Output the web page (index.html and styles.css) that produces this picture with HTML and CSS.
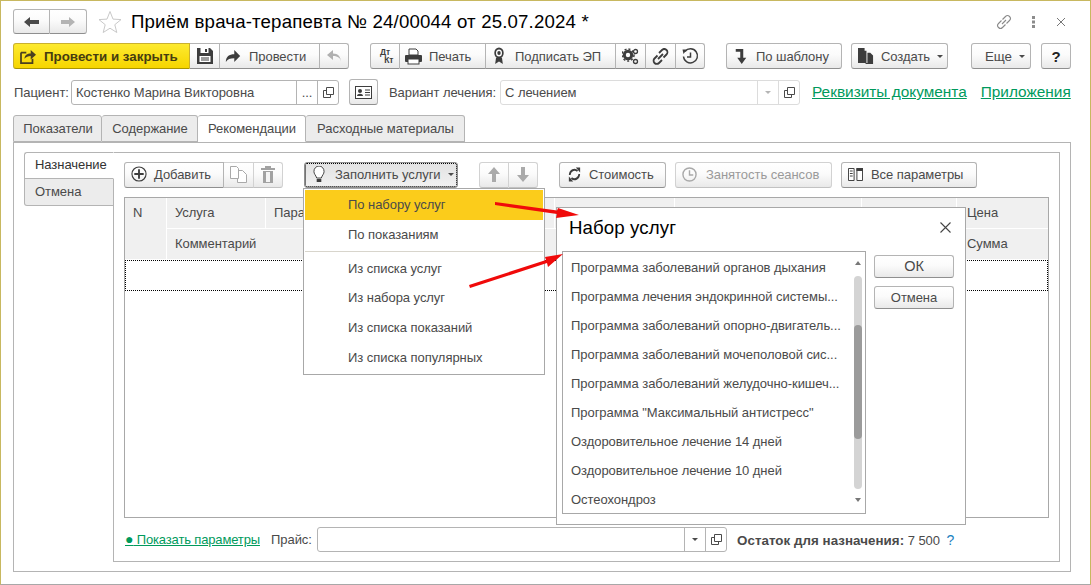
FILE: index.html
```html
<!DOCTYPE html>
<html lang="ru">
<head>
<meta charset="utf-8">
<title>Приём врача-терапевта</title>
<link rel="stylesheet" href="styles.css">
</head>
<body>
<div class="window">
  <header class="head">
    <div class="btn-group nav">
      <button class="btn nav-btn"><svg width="16" height="12" viewBox="0 0 16 12"><path d="M0 6l6-5v3h9v4H6v3z" fill="#4a4a4a"/></svg></button>
      <button class="btn nav-btn"><svg width="16" height="12" viewBox="0 0 16 12"><path d="M15 6L9 1v3H1v4h8v3z" fill="#b4b4b4"/></svg></button>
    </div>
    <svg class="star" width="24" height="24" viewBox="0 0 24 24"><path d="M12 1.500l3 7.600 8 .5-6.200 5.100 2 7.800L12 18.200 5.200 22.500l2-7.800L1 9.600l8-.5z" fill="none" stroke="#c9c9c9"/></svg>
    <h1 class="title">Приём врача-терапевта № 24/00044 от 25.07.2024 *</h1>
    <div class="head-icons">
      <svg width="16" height="16" viewBox="0 0 16 16"><g fill="none" stroke="#8a8a8a" stroke-width="1.100"><path d="M6.500 5.500l3-3a2.800 2.800 0 0 1 4 4l-3 3"/><path d="M9.500 10.500l-3 3a2.800 2.800 0 0 1-4-4l3-3"/><path d="M6 10l4-4"/></g></svg>
      <svg class="dots" width="4" height="12" viewBox="0 0 4 12"><g fill="#8c8c8c"><rect x="0" y="0" width="3" height="3"/><rect x="0" y="4.500" width="3" height="3"/><rect x="0" y="9" width="3" height="3"/></g></svg>
      <svg width="10" height="10" viewBox="0 0 10 10"><path d="M1 1l8 8M9 1l-8 8" stroke="#777" stroke-width="1"/></svg>
    </div>
  </header>

  <div class="toolbar main-tools">
    <div class="btn-group g1">
      <button class="btn primary w-post"><svg width="17" height="15" viewBox="0 0 19 17"><path d="M1 4h6M1 4v12h13v-5" fill="none" stroke="#4a4020" stroke-width="2"/><path d="M5 11c0-4 3-6 7-6V1l6 5.500-6 5.500V8c-3 0-5 1-7 3z" fill="#4a4020"/></svg><b>Провести и закрыть</b></button>
      <button class="btn w30"><svg width="16" height="16" viewBox="0 0 16 16"><path d="M0 0h13l3 3v13H0z" fill="#3d3d3d"/><rect x="3.500" y="0" width="8" height="5" fill="#fff"/><rect x="8" y="1" width="2" height="3" fill="#3d3d3d"/><rect x="2.500" y="8" width="11" height="6" fill="#fff"/><path d="M4 10h8M4 12h8" stroke="#3d3d3d"/></svg></button>
      <button class="btn w-run"><svg width="16" height="13" viewBox="0 0 19 14" preserveAspectRatio="none"><path d="M1 13c0-6 4-8.500 10-8.500V0l7 6.500-7 6.500V9C6 9 3 10 1 13z" fill="#3d3d3d"/></svg>Провести</button>
      <button class="btn w29"><svg width="16" height="13" viewBox="0 0 16 13"><path d="M15 13c0-5-3-7-8-7V10L1 5l6-5v3.500c5 0 8 3 8 9.500z" fill="#b0b0b0"/></svg></button>
    </div>
    <div class="btn-group g2">
      <button class="btn w30"><span class="dtkt"><i>Дт</i><i>Кт</i></span></button>
      <button class="btn w-print"><svg width="17" height="17" viewBox="0 0 17 17"><path d="M4 1h7l2 2v4H4z" fill="#fff" stroke="#3d3d3d"/><rect x="0" y="7" width="17" height="7" rx="1" fill="#3d3d3d"/><rect x="3" y="11" width="11" height="5" fill="#fff" stroke="#3d3d3d"/></svg>Печать</button>
      <button class="btn w-sign"><svg width="12" height="18" viewBox="0 0 14 18" preserveAspectRatio="none"><circle cx="7" cy="6" r="5.500" fill="#3d3d3d"/><circle cx="7" cy="6" r="3.500" fill="#fff"/><circle cx="7" cy="6" r="2" fill="#3d3d3d"/><path d="M3.500 11L2.500 17 7 14.500 11.500 17 10.500 11z" fill="#3d3d3d"/></svg>Подписать ЭП</button>
      <button class="btn w30"><svg width="17" height="17" viewBox="0 0 17 17"><circle cx="6" cy="7" r="3.700" fill="none" stroke="#3d3d3d" stroke-width="3"/><circle cx="6" cy="7" r="6" fill="none" stroke="#3d3d3d" stroke-width="1.500" stroke-dasharray="2 2"/><circle cx="13.500" cy="3.500" r="2" fill="none" stroke="#3d3d3d" stroke-width="1.300"/><circle cx="13.500" cy="13.500" r="2" fill="none" stroke="#3d3d3d" stroke-width="1.300"/></svg></button>
      <button class="btn w30"><svg width="17" height="17" viewBox="0 0 17 17"><g fill="none" stroke="#3d3d3d" stroke-width="1.800"><path d="M7 5l3-3a3 3 0 0 1 4.500 4.500l-3 3"/><path d="M10 12l-3 3a3 3 0 0 1-4.500-4.500l3-3"/><path d="M6 11l5-5"/></g></svg></button>
      <button class="btn w29"><svg width="17" height="17" viewBox="0 0 17 17"><g fill="none" stroke="#3d3d3d" stroke-width="1.500"><path d="M3 3.500A7 7 0 1 1 1.500 8.500"/><path d="M8.500 4.500V9H5"/></g><path d="M0.500 1.500L5 1.500 1.500 6z" fill="#3d3d3d"/></svg></button>
    </div>
    <button class="btn solo w-tpl"><svg width="12" height="15" viewBox="0 0 16 17" preserveAspectRatio="none"><path d="M1 0h10v10h4l-6 7-6-7h4V3H1z" fill="#3d3d3d"/></svg>По шаблону</button>
    <button class="btn solo w-create"><svg width="16" height="16" viewBox="0 0 17 17"><path d="M0 0h7v3h2v13H0z" fill="#3d3d3d"/><path d="M10 5h3l3 3v9H8v-1h2z" fill="#3d3d3d"/></svg>Создать<span class="caret"></span></button>
    <button class="btn solo w-more">Еще<span class="caret"></span></button>
    <button class="btn solo w-help"><b>?</b></button>
  </div>

  <div class="fields">
    <label class="lbl patient-lbl">Пациент:</label>
    <div class="field f-patient"><span class="val">Костенко Марина Викторовна</span><span class="cell">...</span><span class="cell"><svg class="copy" width="11" height="11" viewBox="0 0 11 11"><path d="M3.500.5h7v7h-7zM3.500 3.500h-3v7h7v-3" fill="none" stroke="#4a4a4a"/></svg></span></div>
    <button class="btn solo w-card"><svg width="17" height="13" viewBox="0 0 17 13"><rect x=".5" y=".5" width="16" height="12" fill="#fff" stroke="#3d3d3d"/><circle cx="5" cy="5" r="2" fill="#3d3d3d"/><path d="M2 10c0-3 6-3 6 0z" fill="#3d3d3d"/><path d="M10 4h5M10 6.500h5M10 9h5" stroke="#3d3d3d"/></svg></button>
    <label class="lbl variant-lbl">Вариант лечения:</label>
    <div class="field f-variant"><span class="val">С лечением</span><span class="cell light"><span class="caret pale"></span></span><span class="cell light"><svg class="copy" width="11" height="11" viewBox="0 0 11 11"><path d="M3.500.5h7v7h-7zM3.500 3.500h-3v7h7v-3" fill="none" stroke="#4a4a4a"/></svg></span></div>
    <a class="big-link l1">Реквизиты документа</a>
    <a class="big-link">Приложения</a>
  </div>

  <nav class="tabs">
    <span class="tab t1">Показатели</span>
    <span class="tab t2">Содержание</span>
    <span class="tab t3 active">Рекомендации</span>
    <span class="tab t4">Расходные материалы</span>
  </nav>

  <section class="outer">
    <div class="side">
      <span class="stab active">Назначение</span>
      <span class="stab">Отмена</span>
    </div>
    <div class="inner">
      <div class="toolbar sub-tools">
        <div class="btn-group">
          <button class="btn w-add"><svg width="16" height="16" viewBox="0 0 17 17"><circle cx="8.500" cy="8.500" r="7.500" fill="none" stroke="#3d3d3d" stroke-width="1.200"/><path d="M8.500 3.500v10M3.500 8.500h10" stroke="#3d3d3d" stroke-width="2"/></svg>Добавить</button>
          <button class="btn w30 off"><svg width="17" height="17" viewBox="0 0 17 17"><path d="M.5.500h6l2 2v10h-8zM8.500 4.500h4l4 4v8h-9v-4" fill="#fff" stroke="#a9a9a9"/></svg></button>
          <button class="btn w29 off"><svg width="14" height="17" viewBox="0 0 14 17"><path d="M0 2h14v2H0zM4 0h6v2H4z" fill="#a2a2a2"/><path d="M2 5h10v12H2z" fill="#a2a2a2"/><path d="M5 6v10h4V6z" fill="#f4f4f4"/></svg></button>
        </div>
        <button class="btn solo w-fill pressed"><svg width="12" height="17" viewBox="0 0 13 17" preserveAspectRatio="none"><path d="M4 12C3 9 1 8 1 5.500a5.500 5.500 0 0 1 11 0C12 8 10 9 9 12z" fill="#fff" stroke="#3d3d3d"/><path d="M4 13h5v3H4z" fill="#3d3d3d"/></svg>Заполнить услуги<span class="caret"></span></button>
        <div class="btn-group g-arrows">
          <button class="btn w30 off"><svg width="12" height="15" viewBox="0 0 12 15"><path d="M6 0l6 7H8v8H4V7H0z" fill="#aaa"/></svg></button>
          <button class="btn w29 off"><svg width="12" height="15" viewBox="0 0 12 15"><path d="M6 15l6-7H8V0H4v8H0z" fill="#aaa"/></svg></button>
        </div>
        <button class="btn solo w-cost"><svg width="13" height="15" viewBox="0 0 15 15" preserveAspectRatio="none"><g fill="none" stroke="#3d3d3d" stroke-width="2"><path d="M2 8a5.500 5.500 0 0 1 9-4"/><path d="M13 7a5.500 5.500 0 0 1-9 4"/></g><path d="M9 .5h5v5zM6 14.500H1v-5z" fill="#3d3d3d"/></svg>Стоимость</button>
        <button class="btn solo w-busy off"><svg width="15" height="15" viewBox="0 0 16 16"><circle cx="8" cy="8" r="7" fill="none" stroke="#a9a9a9" stroke-width="1.500"/><path d="M8 3.500V8.500H12" fill="none" stroke="#a9a9a9" stroke-width="1.500"/></svg>Занятость сеансов</button>
        <button class="btn solo w-all"><svg width="15" height="13" viewBox="0 0 16 13" preserveAspectRatio="none"><path d="M.5.500h6v12h-6zM9.500.5h6v12h-6z" fill="#fff" stroke="#3d3d3d"/><path d="M2 3h3M2 5.500h3M2 8h3" stroke="#3d3d3d"/><path d="M9 0h7v3H9z" fill="#3d3d3d"/></svg>Все параметры</button>
      </div>

      <div class="table">
        <div class="hcell c-n">N</div>
        <div class="hcell c-service">Услуга</div>
        <div class="hcell c-param">Параметры</div>
        <div class="hcell c-a"></div>
        <div class="hcell c-b"></div>
        <div class="hcell c-c"></div>
        <div class="hcell c-price">Цена</div>
        <div class="hcell c-comment">Комментарий</div>
        <div class="hcell c-sum">Сумма</div>
        <div class="focus-row"></div>
      </div>

      <div class="bottom">
        <a class="show-link"><span class="dot">●</span>&nbsp;Показать параметры</a>
        <label class="lbl price-lbl">Прайс:</label>
        <div class="field f-price"><span class="val"></span><span class="cell"><span class="caret"></span></span><span class="cell"><svg class="copy" width="11" height="11" viewBox="0 0 11 11"><path d="M3.500.5h7v7h-7zM3.500 3.500h-3v7h7v-3" fill="none" stroke="#4a4a4a"/></svg></span></div>
        <p class="remain"><b>Остаток для назначения:</b> 7 500 <span class="q">?</span></p>
      </div>
    </div>
  </section>

  <div class="menu">
    <div class="mi hover">По набору услуг</div>
    <div class="mi">По показаниям</div>
    <div class="sep"></div>
    <div class="mi">Из списка услуг</div>
    <div class="mi">Из набора услуг</div>
    <div class="mi">Из списка показаний</div>
    <div class="mi">Из списка популярных</div>
  </div>

  <div class="dialog">
    <div class="dlg-head"><h2>Набор услуг</h2><svg width="11" height="11" viewBox="0 0 11 11"><path d="M.5.500l10 10M10.500.5l-10 10" stroke="#444" stroke-width="1.100"/></svg></div>
    <div class="dlg-body">
      <div class="list">
        <ul class="items">
          <li>Программа заболеваний органов дыхания</li>
          <li>Программа лечения эндокринной системы...</li>
          <li>Программа заболеваний опорно-двигатель...</li>
          <li>Программа заболеваний мочеполовой сис...</li>
          <li>Программа заболеваний желудочно-кишеч...</li>
          <li>Программа "Максимальный антистресс"</li>
          <li>Оздоровительное лечение 14 дней</li>
          <li>Оздоровительное лечение 10 дней</li>
          <li>Остеохондроз</li>
        </ul>
        <div class="scroll">
          <span class="sarrow up"></span>
          <div class="track"><div class="thumb"></div></div>
          <span class="sarrow down"></span>
        </div>
      </div>
      <div class="dlg-btns">
        <button class="btn solo dlg-btn ok-btn">ОК</button>
        <button class="btn solo dlg-btn">Отмена</button>
      </div>
    </div>
  </div>

  <svg class="arrows" width="1091" height="585" viewBox="0 0 1091 585">
    <path d="M495 202l62 8.500 1-2.500 21 7-23 3 1-4-62-9z" fill="#f00a0a"/>
    <path d="M469 285l77-25-1-3 18-3-15 13-1-4-77 25z" fill="#f00a0a"/>
  </svg>
</div>
</body>
</html>
```
FILE: styles.css
```css
* { box-sizing: border-box; }
html, body { margin: 0; padding: 0; }
body { width: 1091px; height: 585px; overflow: hidden; background: #fff; font: 13px "Liberation Sans", Arial, sans-serif; letter-spacing: -.05px; color: #4a4a4a; }
h1, h2, p, ul { margin: 0; padding: 0; }
li { list-style: none; }
button { font: inherit; letter-spacing: inherit; color: inherit; padding: 0; margin: 0; }

.window { position: relative; width: 1091px; height: 585px; border-top: 1px solid #c8b860; border-left: 1px solid #c8b860; border-right: 1px solid #c8b860; border-bottom: 1px solid #a8a8a8; padding: 8px 0 0 12px; }

.btn { height: 26px; display: inline-flex; align-items: center; justify-content: center; gap: 7px; border: 1px solid #b4b4b4; border-bottom-color: #8f8f8f; border-left-width: 0; background: linear-gradient(#fff 0%, #fbfbfb 45%, #e9e9e9 100%); white-space: nowrap; }
.btn-group { display: flex; border-radius: 3px; }
.btn-group .btn:first-child { border-left-width: 1px; border-radius: 3px 0 0 3px; }
.btn-group .btn:last-child { border-radius: 0 3px 3px 0; }
.btn.solo { border-left-width: 1px; border-radius: 3px; }
.btn.off { color: #9a9a9a; border-color: #d2d2d2; border-bottom-color: #c2c2c2; }

.head { display: flex; align-items: center; height: 25px; }
.nav-btn { width: 37px; height: 25px; }
.star { margin: 0 0 0 11px; }
.title { font-size: 18.67px; font-weight: 400; color: #000; margin-left: 9px; letter-spacing: .16px; white-space: nowrap; }
.head-icons { margin-left: auto; display: flex; align-items: center; gap: 20px; margin-right: 24px; }

.toolbar { display: flex; }
.main-tools { margin-top: 9px; }
.primary { background: linear-gradient(#fdea30, #f6d500); border-color: #c9b030; border-bottom-color: #a99500; color: #453c10; font-size: 13.33px; letter-spacing: 0; }
.w-post { width: 177px; justify-content: flex-start; padding-left: 6px; }
.w30 { width: 30px; }
.w29 { width: 29px; }
.w-run { width: 100px; justify-content: flex-start; padding-left: 5px; gap: 8px; }
.g2 { margin-left: 21px; }
.w-print { width: 86px; justify-content: flex-start; padding-left: 5px; }
.w-sign { width: 130px; justify-content: flex-start; padding-left: 7px; gap: 10px; }
.w-tpl { width: 116px; margin-left: 21px; justify-content: flex-start; padding-left: 8px; gap: 9px; }
.w-create { width: 97px; margin-left: 9px; justify-content: flex-start; padding-left: 6px; }
.w-more { width: 60px; margin-left: 23px; justify-content: flex-start; padding-left: 13px; font-size: 13.33px; }
.w-help { width: 30px; margin-left: 10px; font-size: 15px; color: #222; }

.dtkt { display: flex; flex-direction: column; width: 17px; font-size: 8.5px; font-weight: 700; line-height: 8px; color: #3d3d3d; letter-spacing: 0; }
.dtkt i { font-style: normal; }
.dtkt i:last-child { align-self: flex-end; }

.caret { display: inline-block; width: 0; height: 0; border: 3px solid transparent; border-top: 3px solid #4a4a4a; border-bottom: 0; }
.caret.pale { border-top-color: #b5b5b5; }

.fields { display: flex; align-items: center; height: 26px; margin-top: 10px; }
.lbl { white-space: nowrap; }
.patient-lbl { width: 58px; padding-left: 1px; }
.field { display: flex; height: 25px; border: 1px solid #b4b4b4; border-radius: 3px; background: #fff; }
.field .val { flex: 1; padding: 0 4px; line-height: 23px; white-space: nowrap; overflow: hidden; }
.cell { width: 21px; display: flex; align-items: center; justify-content: center; border-left: 1px solid #b4b4b4; }
.cell.light { border-left-color: #dcdcdc; }
.f-patient { width: 268px; }
.f-variant { width: 300px; border-color: #dcdcdc; }
.w-card { width: 29px; height: 26px; margin-left: 10px; }
.variant-lbl { margin-left: 11px; width: 111px; }
.big-link { font-size: 15.4px; color: #009a5c; text-decoration: underline; white-space: nowrap; margin-left: 14px; letter-spacing: 0; }
.big-link.l1 { margin-left: 12px; }

.tabs { display: flex; height: 27px; margin-top: 10px; position: relative; z-index: 1; }
.tab { display: flex; align-items: center; justify-content: center; height: 27px; padding-left: 1px; background: #ececec; border: 1px solid #b4b4b4; border-left-width: 0; border-radius: 3px 3px 0 0; }
.t1 { width: 89px; border-left-width: 1px; }
.t2 { width: 96px; }
.t3 { width: 108px; }
.t4 { width: 159px; }
.tab.active { background: #fff; border-bottom-color: #fff; }

.outer { display: flex; width: 1058px; height: 430px; border: 1px solid #b4b4b4; padding: 9px 10px; margin-top: 0; }
.side { width: 90px; display: flex; flex-direction: column; position: relative; z-index: 1; }
.stab { height: 27px; display: flex; align-items: center; padding: 0 0 2px 10px; background: #ececec; border: 1px solid #b4b4b4; border-top-width: 0; border-radius: 0 0 0 3px; }
.stab.active { background: #fff; border-top-width: 1px; border-bottom-color: #b4b4b4; border-right-color: #fff; border-radius: 3px 0 0 0; color: #333; }
.inner { width: 947px; height: 410px; border: 1px solid #b4b4b4; margin-left: -1px; padding: 9px 10px 0; display: flex; flex-direction: column; }

.sub-tools { height: 26px; }
.sub-tools .btn { padding-bottom: 2px; }
.w-add { width: 100px; justify-content: flex-start; padding-left: 6px; }
.w-fill { width: 154px; margin-left: 21px; justify-content: flex-start; padding-left: 8px; gap: 10px; background: linear-gradient(#e2e2e2, #f1f1f1); border-color: #8f8f8f; outline: 1px dotted #000; outline-offset: -2px; }
.w-fill .caret { margin-left: -3px; }
.g-arrows { margin-left: 21px; }
.w-cost { width: 107px; margin-left: 21px; justify-content: flex-start; padding-left: 8px; gap: 8px; }
.w-busy { width: 157px; margin-left: 9px; justify-content: flex-start; padding-left: 6px; gap: 9px; }
.w-all { width: 136px; margin-left: 9px; justify-content: flex-start; padding-left: 6px; gap: 8px; }

.table { position: relative; margin-top: 9px; width: 925px; height: 321px; border: 1px solid #a8a8a8; display: grid; grid-template-columns: 42px 99px 289px 120px 187px 95px 91px; grid-template-rows: 31px 31px 31px; align-content: start; }
.hcell { background: #f0f0f0; border-right: 1px solid #fff; border-bottom: 1px solid #fff; padding: 7px 0 0 8px; white-space: nowrap; overflow: hidden; }
.c-n { grid-row: 1 / 3; }
.c-comment { grid-column: 2 / 7; grid-row: 2; }
.c-sum { grid-column: 7; grid-row: 2; padding-left: 10px; border-right: 0; }
.c-price { padding-left: 10px; border-right: 0; }
.focus-row { grid-column: 1 / -1; grid-row: 3; border: 1px dotted #000; }

.bottom { display: flex; align-items: center; height: 25px; margin-top: 9px; }
.show-link { color: #009a5c; text-decoration: underline; white-space: nowrap; width: 147px; padding-left: 1px; letter-spacing: -.15px; }
.dot { font-size: 14px; line-height: 13px; }
.price-lbl { width: 46px; }
.f-price { width: 410px; }
.remain { margin-left: 10px; white-space: nowrap; }
.remain b { font-size: 13.33px; letter-spacing: .05px; }
.q { color: #1a7fc0; margin-left: 3px; font-size: 14px; }

.menu { position: absolute; left: 302px; top: 187px; width: 242px; height: 187px; background: #fff; border: 1px solid #a8a8a8; padding: 1px; z-index: 5; }
.mi { height: 29.7px; display: flex; align-items: center; padding-left: 43px; }
.mi.hover { background: #fbcc1b; }
.sep { height: 1px; background: #d8d5cc; margin: 2px 0 1px; }

.dialog { position: absolute; left: 555px; top: 206px; width: 410px; height: 318px; background: #fff; border: 1px solid #a8a8a8; padding: 0 11px 0 5px; z-index: 6; }
.dlg-head { height: 43px; display: flex; align-items: center; justify-content: space-between; padding: 0 3px 4px 7px; }
.dlg-head h2 { font-size: 18.67px; font-weight: 400; color: #000; letter-spacing: .1px; }
.dlg-body { display: flex; gap: 8px; }
.list { position: relative; display: flex; width: 304px; height: 263px; border: 1px solid #a8a8a8; padding-left: 8px; }
.items { flex: 1; padding-top: 1px; }
.items li { height: 29px; line-height: 29px; white-space: nowrap; }
.scroll { width: 8px; display: flex; flex-direction: column; align-items: center; margin-right: 3px; }
.sarrow { display: block; width: 0; height: 0; border: 3px solid transparent; }
.sarrow.up { border-bottom: 4px solid #777; border-top: 0; margin-top: 9px; }
.sarrow.down { border-top: 4px solid #777; border-bottom: 0; margin-top: 9px; }
.track { width: 8px; height: 213px; margin-top: 11px; background: #d4d4d4; border-radius: 4px; position: relative; }
.thumb { position: absolute; left: 0; top: 49px; width: 8px; height: 114px; background: #9b9b9b; border-radius: 4px; }
.dlg-btns { display: flex; flex-direction: column; gap: 8px; padding-top: 4px; }
.dlg-btn { width: 80px; height: 23px; }
.ok-btn { font-size: 14.5px; padding-bottom: 2px; }

.arrows { position: absolute; left: -1px; top: -1px; z-index: 7; pointer-events: none; }
```
